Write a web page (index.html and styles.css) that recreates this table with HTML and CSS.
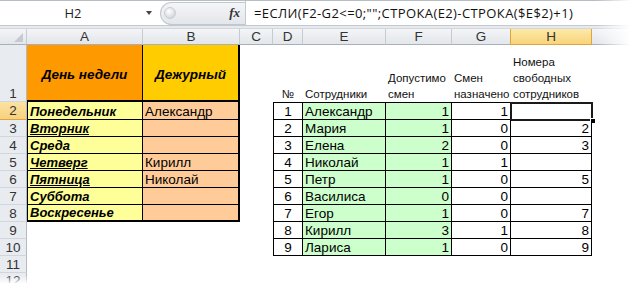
FILE: index.html
```html
<!DOCTYPE html>
<html lang="ru">
<head>
<meta charset="utf-8">
<title>Excel</title>
<link rel="stylesheet" href="styles.css">
</head>
<body>
<div class="app">
  <div class="fbar">
    <div class="namebox"><span class="nb-text">H2</span><span class="dd"></span></div>
    <div class="fmid">
      <div class="pill"><span class="knob"></span><span class="fx">fx</span></div>
    </div>
    <div class="formula">=ЕСЛИ(F2-G2&lt;=0;"";СТРОКА(E2)-СТРОКА($E$2)+1)</div>
  </div>
  <div class="fgap"></div>
  <div class="sheet">
    <div class="corner"><span class="tri"></span></div>
    <div class="ch">A</div><div class="ch">B</div><div class="ch">C</div><div class="ch">D</div>
    <div class="ch">E</div><div class="ch">F</div><div class="ch">G</div><div class="ch ch-sel">H</div><div class="ch ch-last"></div>

    <div class="rh rh-bottom">1</div>
    <div class="c a1 hd">День недели</div>
    <div class="c b1 hd">Дежурный</div>
    <div class="c"></div>
    <div class="c lab lab-c">№</div>
    <div class="c lab">Сотрудники</div>
    <div class="c lab">Допустимо<br>смен</div>
    <div class="c lab">Смен<br>назначено</div>
    <div class="c lab">Номера<br>свободных<br>сотрудников</div>
    <div class="c"></div>

    <div class="rh rh-sel">2</div>
    <div class="c da">Понедельник</div><div class="c db">Александр</div><div class="c"></div>
    <div class="c td tnum top">1</div><div class="c te top">Александр</div><div class="c tf top">1</div><div class="c tg top">1</div><div class="c th top"><span class="sel"><span class="handle"></span></span></div><div class="c"></div>

    <div class="rh">3</div>
    <div class="c da"><span class="ul">Вторник</span></div><div class="c db"></div><div class="c"></div>
    <div class="c td tnum">2</div><div class="c te">Мария</div><div class="c tf">1</div><div class="c tg">0</div><div class="c th">2</div><div class="c"></div>

    <div class="rh">4</div>
    <div class="c da">Среда</div><div class="c db"></div><div class="c"></div>
    <div class="c td tnum">3</div><div class="c te">Елена</div><div class="c tf">2</div><div class="c tg">0</div><div class="c th">3</div><div class="c"></div>

    <div class="rh">5</div>
    <div class="c da"><span class="ul">Четверг</span></div><div class="c db">Кирилл</div><div class="c"></div>
    <div class="c td tnum">4</div><div class="c te">Николай</div><div class="c tf">1</div><div class="c tg">1</div><div class="c th"></div><div class="c"></div>

    <div class="rh">6</div>
    <div class="c da"><span class="ul">Пятница</span></div><div class="c db">Николай</div><div class="c"></div>
    <div class="c td tnum">5</div><div class="c te">Петр</div><div class="c tf">1</div><div class="c tg">0</div><div class="c th">5</div><div class="c"></div>

    <div class="rh">7</div>
    <div class="c da">Суббота</div><div class="c db"></div><div class="c"></div>
    <div class="c td tnum">6</div><div class="c te">Василиса</div><div class="c tf">0</div><div class="c tg">0</div><div class="c th"></div><div class="c"></div>

    <div class="rh">8</div>
    <div class="c da last">Воскресенье</div><div class="c db last"></div><div class="c"></div>
    <div class="c td tnum">7</div><div class="c te">Егор</div><div class="c tf">1</div><div class="c tg">0</div><div class="c th">7</div><div class="c"></div>

    <div class="rh">9</div>
    <div class="c"></div><div class="c"></div><div class="c"></div>
    <div class="c td tnum">8</div><div class="c te">Кирилл</div><div class="c tf">3</div><div class="c tg">1</div><div class="c th">8</div><div class="c"></div>

    <div class="rh">10</div>
    <div class="c"></div><div class="c"></div><div class="c"></div>
    <div class="c td tnum">9</div><div class="c te">Лариса</div><div class="c tf">1</div><div class="c tg">0</div><div class="c th">9</div><div class="c"></div>

    <div class="rh">11</div>
    <div class="c"></div><div class="c"></div><div class="c"></div><div class="c"></div><div class="c"></div><div class="c"></div><div class="c"></div><div class="c"></div><div class="c"></div>

    <div class="rh rh-cut">12</div>
    <div class="c"></div><div class="c"></div><div class="c"></div><div class="c"></div><div class="c"></div><div class="c"></div><div class="c"></div><div class="c"></div><div class="c"></div>
  </div>
  <div class="fade-r"></div>
  <div class="fade-b"></div>
</div>
</body>
</html>
```
FILE: styles.css
```css
* { box-sizing: border-box; }
body { margin: 0; background: #fff; font-family: "Liberation Sans", Arial, sans-serif; }
.app { position: relative; width: 634px; height: 283px; overflow: hidden; background: #fff; }

/* formula bar */
.fbar {
  height: 26px;
  display: flex;
  border-top: 1px solid #b7bdc5;
  border-bottom: 1px solid #c4c9d0;
  background: #fff;
}
.namebox {
  width: 158px;
  display: flex;
  align-items: center;
  position: relative;
  font-family: "Open Sans", "Noto Sans", sans-serif;
  font-size: 13px;
  color: #1e1e1e;
}
.nb-text { width: 146px; text-align: center; }
.dd {
  width: 0; height: 0;
  border-left: 3.5px solid transparent;
  border-right: 3.5px solid transparent;
  border-top: 4px solid #444;
}
.fmid { width: 87px; display: flex; align-items: center; }
.pill {
  height: 23px;
  width: 85px;
  margin-left: 2px;
  border: 1px solid #c2c7ce;
  border-right: none;
  border-radius: 12px 0 0 12px;
  background: linear-gradient(#f4f5f7, #e3e6ea);
  display: flex;
  align-items: center;
  justify-content: space-between;
  padding: 0 5px 0 3px;
}
.knob {
  width: 12px; height: 12px;
  border-radius: 50%;
  background: radial-gradient(circle at 40% 35%, #ffffff, #d6dadf 70%, #c3c8ce);
  border: 1px solid #c9cdd3;
}
.fx {
  font-family: "Liberation Serif", "DejaVu Serif", serif;
  font-style: italic;
  font-weight: bold;
  font-size: 13px;
  color: #333;
}
.formula {
  flex: 1;
  border-left: 1px solid #c4c9d0;
  padding-left: 8px;
  display: flex;
  align-items: center;
  font-family: "Open Sans", "Noto Sans", sans-serif;
  font-size: 13px;
  letter-spacing: 0.4px;
  color: #111;
  white-space: nowrap;
}
.fgap {
  height: 3px;
  background: #e6e9ed;
  border-bottom: 1px solid #d3d7dc;
}

/* sheet grid */
.sheet {
  display: grid;
  grid-template-columns: 27px 116px 97px 33px 30px 83px 66px 59px 81px 42px;
  grid-template-rows: 16px 57px 18px repeat(10, 17px);
}
.corner, .ch {
  background: linear-gradient(#f3f5f7, #e3e6ea);
  border-right: 1px solid #c6cbd2;
  border-bottom: 1px solid #a9b0b9;
}
.corner { position: relative; }
.tri {
  position: absolute;
  right: 3px; bottom: 2px;
  width: 0; height: 0;
  border-left: 9px solid transparent;
  border-bottom: 9px solid #c5cad0;
}
.ch {
  display: flex;
  align-items: center;
  justify-content: center;
  font-size: 13.5px;
  color: #333;
}
.ch-sel {
  background: linear-gradient(#fde9a8, #f8d47c);
  border-right: 1px solid #e0a43c;
  border-bottom: 1px solid #e0a43c;
  border-left: 1px solid #e0a43c;
  margin-left: -1px;
}
.ch-last { border-right: none; }

.rh {
  background: #e8ebef;
  border-right: 1px solid #b4bac2;
  border-bottom: 1px solid #d2d6db;
  display: flex;
  align-items: center;
  justify-content: center;
  font-size: 13.5px;
  color: #333;
}
.rh-bottom { align-items: flex-end; }
.rh-sel { background: linear-gradient(#fbe3a2, #f7d17e); border-bottom-color: #e0a43c; }
.rh-cut { align-items: flex-start; }

.c {
  font-size: 13.5px;
  color: #000;
  display: flex;
  align-items: flex-end;
  line-height: 15px;
  white-space: nowrap;
  position: relative;
}

/* weekday table */
.hd {
  font-weight: bold;
  font-style: italic;
  justify-content: center;
  align-items: center;
  padding-top: 3px;
  border-bottom: 2px solid #000;
}
.a1 { background: #ff9900; border-right: 1px solid #000; }
.b1 { background: #ffcc00; border-right: 2px solid #000; }
.da {
  background: #ffff99;
  font-weight: bold;
  font-style: italic;
  font-size: 13px;
  border-left: 1px solid #000;
  border-right: 1px solid #000;
  border-bottom: 1px solid #000;
  padding-left: 2px;
}
.ul { text-decoration: underline; }
.db {
  background: #ffcc99;
  border-right: 2px solid #000;
  border-bottom: 1px solid #000;
  padding-left: 2px;
}
.da.last, .db.last { border-bottom: 2px solid #000; }

/* staff table */
.lab {
  font-size: 11.5px;
  line-height: 16px;
  color: #111;
  padding-left: 2px;
  white-space: normal;
}
.lab-c { justify-content: center; padding-left: 0; }
.td, .te, .tf, .tg, .th {
  border-right: 1px solid #000;
  border-bottom: 1px solid #000;
}
.top { border-top: 1px solid #000; }
.td { border-left: 1px solid #000; justify-content: center; }
.te { background: #ccffcc; padding-left: 2px; }
.tf { background: #ccffcc; justify-content: flex-end; padding-right: 2px; }
.tg { justify-content: flex-end; padding-right: 2px; }
.th { justify-content: flex-end; padding-right: 2px; }

.sel {
  position: absolute;
  left: -1px; top: -1px; right: -2px; bottom: -2px;
  border: 2px solid #1a1a1a;
  box-shadow: inset 0 0 0 1px #fff;
}
.handle {
  position: absolute;
  right: -5px; bottom: -5px;
  width: 6px; height: 6px;
  background: #000;
  border: 1px solid #fff;
}

.fade-r {
  position: absolute;
  top: 0; right: 0;
  width: 38px; height: 100%;
  background: linear-gradient(to right, rgba(255,255,255,0), #fff 90%);
}
.fade-b {
  position: absolute;
  left: 0; bottom: 0;
  width: 100%; height: 8px;
  background: linear-gradient(rgba(255,255,255,0), rgba(255,255,255,0.85));
}
```
